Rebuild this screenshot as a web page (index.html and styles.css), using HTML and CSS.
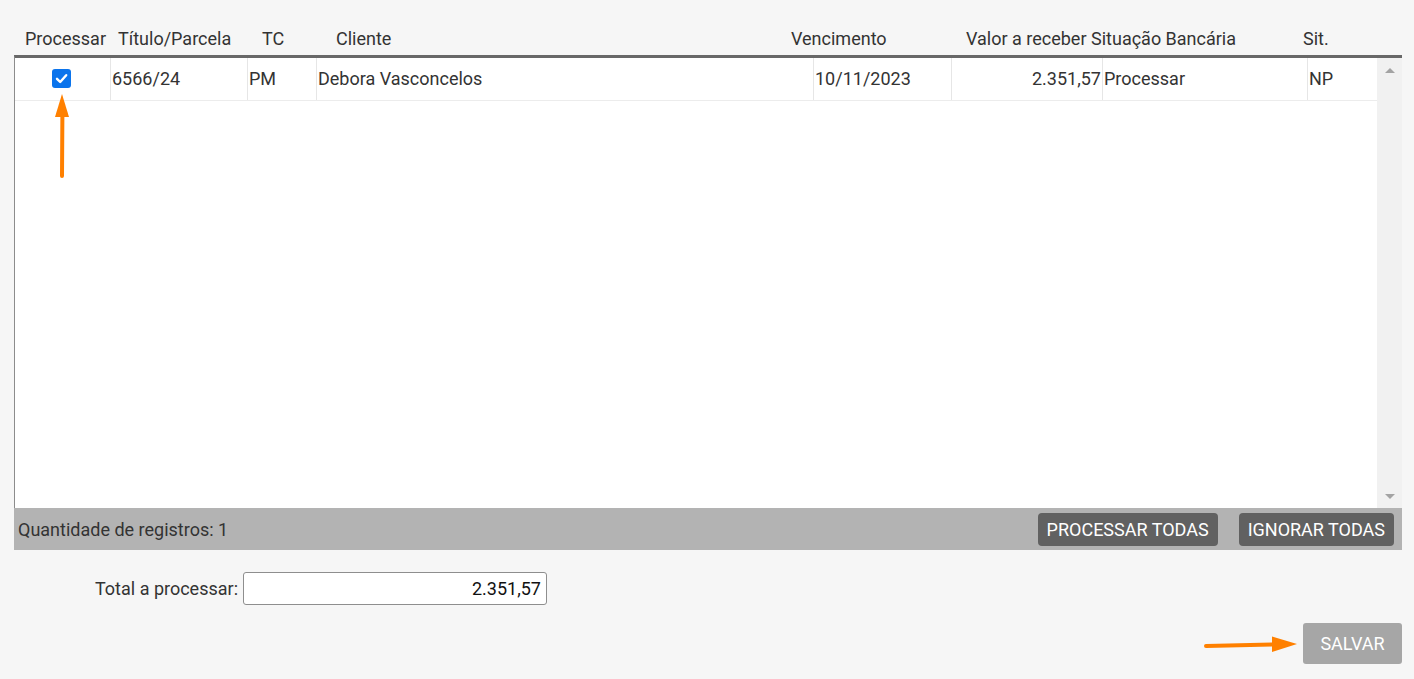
FILE: index.html
```html
<!DOCTYPE html>
<html lang="pt-BR">
<head>
<meta charset="utf-8">
<title>Processar títulos</title>
<link rel="stylesheet" href="styles.css">
</head>
<body>
<div class="page">
  <div class="head">
    <div class="hc">Processar</div>
    <div class="hc">Título/Parcela</div>
    <div class="hc">TC</div>
    <div class="hc">Cliente</div>
    <div class="hc">Vencimento</div>
    <div class="hc">Valor a receber</div>
    <div class="hc">Situação Bancária</div>
    <div class="hc">Sit.</div>
  </div>
  <div class="grid">
    <div class="rows">
      <div class="row">
        <div class="cell c-check">
          <span class="chk"><svg viewBox="0 0 19 19" width="19" height="19"><path d="M5 9.8 L8.2 13 L14.2 6.2" fill="none" stroke="#fff" stroke-width="2.4" stroke-linecap="round" stroke-linejoin="round"/></svg></span>
        </div>
        <div class="cell">6566/24</div>
        <div class="cell">PM</div>
        <div class="cell">Debora Vasconcelos</div>
        <div class="cell">10/11/2023</div>
        <div class="cell num">2.351,57</div>
        <div class="cell">Processar</div>
        <div class="cell">NP</div>
      </div>
    </div>
    <div class="scroll">
      <span class="tri up"></span>
      <span class="tri down"></span>
    </div>
  </div>
  <div class="foot">
    <span class="count">Quantidade de registros: 1</span>
    <div class="actions">
      <button class="btn dark">PROCESSAR TODAS</button>
      <button class="btn dark">IGNORAR TODAS</button>
    </div>
  </div>
  <div class="total">
    <label class="total-label" for="tot">Total a processar:</label>
    <input id="tot" class="total-input" type="text" value="2.351,57" readonly>
  </div>
  <div class="save-row">
    <button class="btn save">SALVAR</button>
  </div>

  <svg class="arrow arrow-up" width="20" height="86" viewBox="0 0 20 86">
    <path d="M10 82 L10.4 20" stroke="#ff8000" stroke-width="4" stroke-linecap="round" fill="none"/>
    <path d="M10 0 L17 23 L3 23 Z" fill="#ff8000"/>
  </svg>
  <svg class="arrow arrow-right" width="96" height="20" viewBox="0 0 96 20">
    <path d="M3 11 L72 9.5" stroke="#ff8000" stroke-width="4" stroke-linecap="round" fill="none"/>
    <path d="M94 9 L69 1.5 L69 17 Z" fill="#ff8000"/>
  </svg>
</div>
</body>
</html>
```

FILE: styles.css
```css
* { box-sizing: border-box; }
html, body { margin: 0; padding: 0; }
body {
  background: #f6f6f6;
  font-family: Roboto, "Liberation Sans", Arial, sans-serif;
  font-size: 18px;
  color: #333;
}
.page {
  position: relative;
  width: 1414px;
  height: 679px;
  padding: 20px 12px 0 14px;
}
.head {
  display: grid;
  grid-template-columns: 93px 144px 74px 455px 175px 125px 212px auto;
  height: 35px;
  align-items: center;
  padding-left: 11px;
  color: #333;
}
.hc { white-space: nowrap; padding-top: 1px; }
.grid {
  display: flex;
  height: 453px;
  border-top: 3px solid #686868;
  border-left: 1px solid #8c8c8c;
  background: #fff;
}
.rows { flex: 1; }
.row {
  display: grid;
  grid-template-columns: 95px 137px 69px 497px 138px 151px 205px 70px;
  height: 43px;
  border-bottom: 1px solid #ececec;
}
.cell {
  display: flex;
  align-items: center;
  padding: 0 1px 2px;
  border-left: 1px solid #e6e6e6;
  color: #333;
  white-space: nowrap;
}
.cell.c-check { border-left: none; justify-content: center; padding: 0 2px 2px 0; }
.cell.num { justify-content: flex-end; }
.chk {
  display: inline-block;
  width: 19px;
  height: 19px;
  border-radius: 3px;
  background: #0b74ec;
}
.chk svg { display: block; }
.scroll {
  width: 25px;
  background: #f1f1f1;
  display: flex;
  flex-direction: column;
  justify-content: space-between;
  align-items: center;
  padding: 10px 0 9px;
}
.tri { width: 0; height: 0; border-left: 5px solid transparent; border-right: 5px solid transparent; }
.tri.up { border-bottom: 5px solid #a3a3a3; }
.tri.down { border-top: 5px solid #a3a3a3; }
.foot {
  display: flex;
  align-items: center;
  justify-content: space-between;
  height: 42px;
  background: #b3b3b3;
  padding: 0 8px 0 4px;
}
.count { color: #333; padding-top: 1px; }
.actions { display: flex; gap: 21px; }
.btn {
  font-family: Roboto, "Liberation Sans", Arial, sans-serif;
  font-size: 18px;
  border: none;
  color: #fff;
  border-radius: 4px;
  cursor: pointer;
}
.btn.dark {
  background: #616161;
  height: 33px;
  padding: 0 9px;
}
.total {
  display: flex;
  align-items: center;
  margin-top: 22px;
  gap: 5px;
}
.total-label {
  width: 224px;
  text-align: right;
  color: #333;
}
.total-input {
  width: 304px;
  height: 33px;
  border: 1px solid #8e8e8e;
  border-radius: 3px;
  background: #fff;
  text-align: right;
  padding: 0 5px;
  font-family: Roboto, "Liberation Sans", Arial, sans-serif;
  font-size: 18px;
  color: #111;
  outline: none;
}
.save-row {
  display: flex;
  justify-content: flex-end;
  margin-top: 18px;
}
.btn.save {
  background: #a6a6a6;
  width: 99px;
  height: 41px;
  font-size: 18px;
  border-radius: 3px;
}
.arrow { position: absolute; }
.arrow-up { left: 52px; top: 94px; }
.arrow-right { left: 1203px; top: 635px; }
```
